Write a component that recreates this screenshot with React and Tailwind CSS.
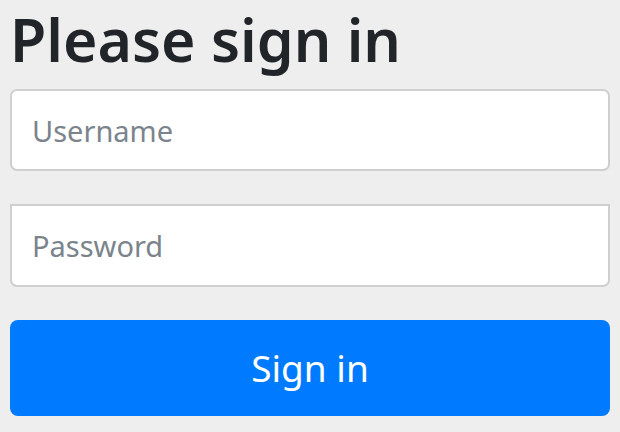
export default function App() {
  return (
    <div className="min-h-screen bg-[#eeeeee] px-[10px] font-['Noto_Sans','Open_Sans',sans-serif]">
      <h2 className="pb-[10px] text-[59px] leading-[79px] font-semibold text-[#212529]">
        Please sign in
      </h2>
      <form className="flex flex-col" onSubmit={(e) => e.preventDefault()}>
        <input
          type="text"
          placeholder="Username"
          className="h-[82px] w-full rounded-[7px] border-2 border-[#cfcfcf] bg-white px-[20px] text-[29px] text-[#495057] outline-none placeholder:text-[#7b848c]"
        />
        <input
          type="password"
          placeholder="Password"
          className="mt-[33px] h-[83px] w-full rounded-b-[7px] border-2 border-[#cfcfcf] bg-white px-[20px] text-[29px] text-[#495057] outline-none placeholder:text-[#7b848c]"
        />
        <button
          type="submit"
          className="mt-[33px] h-[96px] w-full rounded-[8px] bg-[#007bff] text-[37px] text-white"
        >
          Sign in
        </button>
      </form>
    </div>
  );
}
